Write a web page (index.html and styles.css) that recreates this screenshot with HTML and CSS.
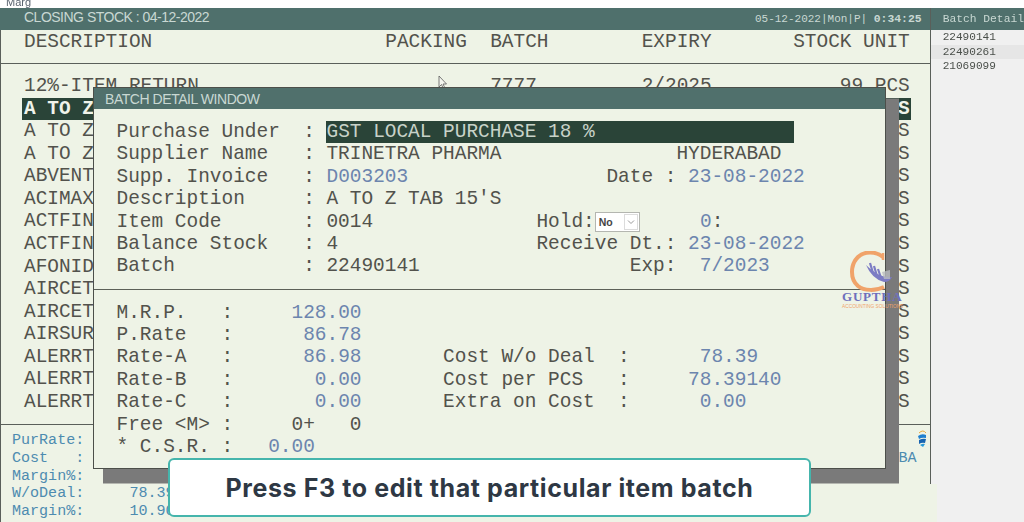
FILE: index.html
```html
<!DOCTYPE html>
<html lang="en">

<head>
    <meta charset="UTF-8">
    <title>Marg - Closing Stock</title>
    <link rel="stylesheet" href="styles.css">
</head>

<body>
    <div class="app-title">Marg</div>

    <div class="screen">
        <section class="stock">
            <header class="bar">
                <span class="bar-title">CLOSING STOCK : 04-12-2022</span>
                <span class="bar-clock">05-12-2022|Mon|P| <b>0:34:25</b></span>
            </header>

            <div class="row heads">
                <span>DESCRIPTION</span><span>PACKING</span><span>BATCH</span><span>EXPIRY</span><span class="qty">STOCK UNIT</span>
            </div>

            <div class="list">
                <div class="row"><span>12%-ITEM RETURN</span><span></span><span>7777</span><span>2/2025</span><span class="qty">99 PCS</span></div>
                <div class="row selected"><span>A TO Z TAB 15'S</span><span class="qty">PCS</span></div>
                <div class="row"><span>A TO Z</span><span class="qty">PCS</span></div>
                <div class="row"><span>A TO Z</span><span class="qty">PCS</span></div>
                <div class="row"><span>ABVENT</span><span class="qty">PCS</span></div>
                <div class="row"><span>ACIMAX</span><span class="qty">PCS</span></div>
                <div class="row"><span>ACTFIN</span><span class="qty">PCS</span></div>
                <div class="row"><span>ACTFIN</span><span class="qty">PCS</span></div>
                <div class="row"><span>AFONID</span><span class="qty">PCS</span></div>
                <div class="row"><span>AIRCET</span><span class="qty">PCS</span></div>
                <div class="row"><span>AIRCET</span><span class="qty">PCS</span></div>
                <div class="row"><span>AIRSUR</span><span class="qty">PCS</span></div>
                <div class="row"><span>ALERRT</span><span class="qty">PCS</span></div>
                <div class="row"><span>ALERRT</span><span class="qty">PCS</span></div>
                <div class="row"><span>ALERRT</span><span class="qty">PCS</span></div>
            </div>

            <footer class="summary">
                <div class="summary-lines">
                    <div class="line">PurRate:</div>
                    <div class="line">Cost   :</div>
                    <div class="line">Margin%:</div>
                    <div class="line">W/oDeal:     78.39</div>
                    <div class="line">Margin%:     10.90</div>
                </div>
                <div class="summary-side">
                    <svg class="globe" width="10" height="18" viewBox="0 0 10 18">
                        <path d="M2 3 Q6 -1 9 3" fill="none" stroke="#e8a93c" stroke-width="1"/>
                        <path d="M1 6 Q5 3 9 5 L9 8 Q5 7 2 9 Z" fill="#1f7fd0"/>
                        <path d="M2 10 Q6 8 9 9 L8 13 Q5 12 2 14 Z" fill="#1763b0"/>
                        <path d="M3 15 Q6 13 8 14 L6 17 Z" fill="#2a9ad8"/>
                    </svg>
                    <span class="summary-code">BA</span>
                </div>
            </footer>
        </section>

        <aside class="batches">
            <div class="batches-head">Batch Detail</div>
            <div class="batch">22490141</div>
            <div class="batch current">22490261</div>
            <div class="batch">21069099</div>
        </aside>
    </div>

    <svg class="cursor" width="10" height="15" viewBox="0 0 10 15">
        <path d="M1 1 L1 12 L3.5 9.5 L5.5 14 L7 13.2 L5 9 L8.5 9 Z" fill="#f4f6ef" stroke="#5a5a5a" stroke-width="0.8"/>
    </svg>

    <div class="dialog">
        <div class="dialog-title">BATCH DETAIL WINDOW</div>

        <div class="dialog-upper">
            <div class="line">Purchase Under  : <span class="picked">GST LOCAL PURCHASE 18 %</span></div>
            <div class="line">Supplier Name   : TRINETRA PHARMA               HYDERABAD</div>
            <div class="line">Supp. Invoice   : <span class="val">D003203</span>                 Date : <span class="val">23-08-2022</span></div>
            <div class="line">Description     : A TO Z TAB 15'S</div>
            <div class="line">Item Code       : 0014              Hold:<span class="combo">No<span class="combo-arrow"><svg width="8" height="6" viewBox="0 0 8 6"><path d="M1 1.5 L4 4.5 L7 1.5" fill="none" stroke="#9a9a9a"/></svg></span></span>     <span class="val">0</span>:</div>
            <div class="line">Balance Stock   : 4                 Receive Dt.: <span class="val">23-08-2022</span></div>
            <div class="line">Batch           : 22490141                  Exp:  <span class="val">7/2023</span></div>
        </div>

        <div class="dialog-lower">
            <div class="line">M.R.P.   :     <span class="val">128.00</span></div>
            <div class="line">P.Rate   :      <span class="val">86.78</span></div>
            <div class="line">Rate-A   :      <span class="val">86.98</span>       Cost W/o Deal  :      <span class="val">78.39</span></div>
            <div class="line">Rate-B   :       <span class="val">0.00</span>       Cost per PCS   :     <span class="val">78.39140</span></div>
            <div class="line">Rate-C   :       <span class="val">0.00</span>       Extra on Cost  :      <span class="val">0.00</span></div>
            <div class="line">Free &lt;M&gt; :     0+   0</div>
            <div class="line">* C.S.R. :   <span class="val">0.00</span></div>
        </div>
    </div>

    <div class="logo">
        <svg width="58" height="42" viewBox="0 0 58 42">
            <path d="M41 6 C34 0 22 0 16 6 C8 14 8 28 16 35 C22 40 34 40 42 36" fill="none" stroke="#f0a36a" stroke-width="4"/>
            <path d="M41 2 L41 9" stroke="#f0a36a" stroke-width="2.5"/>
            <path d="M24 14 Q30 28 42 31 Q48 31 50 26 Q38 28 24 14 Z" fill="#7c7cc4"/>
            <path d="M28 12 L31 22 M32 15 L35 25 M36 18 L39 27" stroke="#7c7cc4" stroke-width="2.2"/>
            <path d="M40 21 L48 19 L48 28 L42 28 Z" fill="#b9bcc0" opacity="0.8"/>
        </svg>
        <div class="logo-name">GUPTHA</div>
        <div class="logo-sub">ACCOUNTING SOLUTIONS</div>
    </div>

    <div class="toast">Press F3 to edit that particular item batch</div>
</body>

</html>
```

FILE: styles.css
```css
* {
    box-sizing: border-box;
}

html,
body {
    margin: 0;
    padding: 0;
}

body {
    position: relative;
    width: 1024px;
    height: 522px;
    overflow: hidden;
    background: #fff;
    font-family: 'Liberation Mono', monospace;
    color: #52524c;
    filter: blur(0.35px);
}

.app-title {
    height: 8px;
    padding-left: 6px;
    overflow: hidden;
    font-family: 'Liberation Sans', sans-serif;
    font-size: 11px;
    line-height: 5px;
    color: #5a6470;
}

.screen {
    display: flex;
    height: 514px;
}

/* Closing stock list */
.stock {
    position: relative;
    display: flex;
    flex-direction: column;
    width: 933px;
    border-left: 1px solid #5a5f5a;
    background: #eef3e6;
    font-size: 19.43px;
    line-height: 22.57px;
}

.stock::after {
    content: '';
    position: absolute;
    top: 0;
    right: 0;
    width: 1px;
    height: 476px;
    background: #5a5f5a;
}

.bar {
    display: flex;
    flex: none;
    justify-content: space-between;
    align-items: center;
    height: 22px;
    margin-left: -1px;
    padding: 0 9px 0 24px;
    background: #4f706c;
    color: #c9d8d3;
}

.bar-title {
    margin-top: -3px;
    font-family: 'Liberation Sans', sans-serif;
    font-size: 14px;
    letter-spacing: -0.5px;
}

.bar-clock {
    margin-top: -1px;
    font-size: 11px;
    line-height: 22px;
    white-space: pre;
}

.bar-clock b {
    font-size: 11.4px;
}

.row {
    display: grid;
    grid-template-columns: 31ch 9ch 13ch 13ch 10ch;
    width: 76ch;
    margin-left: 23px;
    white-space: pre;
}

.qty {
    grid-column: 5;
    text-align: right;
}

.heads {
    flex: none;
    width: auto;
    height: 34px;
    margin-left: 0;
    margin-right: 1px;
    padding: 1px 0 0 23px;
    border-bottom: 1px solid #5a5f5a;
}

.list {
    flex: 1;
    padding-top: 11px;
}

.selected {
    width: calc(76ch + 3px);
    margin-left: 21px;
    padding-left: 2px;
    background: #2a4438;
    color: #f0f3ea;
    font-weight: bold;
}

.summary {
    flex: none;
    display: flex;
    justify-content: space-between;
    height: 98px;
    padding: 7px 4px 0 11px;
    border-top: 1px solid #5a5f5a;
    font-size: 15.05px;
    line-height: 17.8px;
    color: #4d8bb0;
}

.summary-side {
    display: flex;
    flex-direction: column;
    align-items: flex-end;
}

.globe {
    margin-top: -2px;
}

.summary-code {
    margin-top: 2px;
    margin-right: 10px;
}

/* Batch column on the right */
.batches {
    flex: 1;
    background: #f0f0f0 linear-gradient(#eef3e6, #eef3e6) left bottom / 6px 38px no-repeat;
    font-size: 11.1px;
    color: #4a4f4a;
}

.batches-head {
    height: 22px;
    padding-left: 12px;
    background: #4f706c;
    color: #c9d8d3;
    font-size: 11.3px;
    line-height: 23px;
    white-space: nowrap;
    overflow: hidden;
}

.batch {
    height: 14.5px;
    padding-left: 12px;
    line-height: 14.5px;
}

.current {
    background: #e6e6e6;
}

.cursor {
    position: absolute;
    left: 438px;
    top: 75px;
}

/* Batch detail window */
.dialog {
    position: absolute;
    left: 93px;
    top: 87px;
    width: 793px;
    height: 382px;
    border: 1px solid #4c4f4a;
    background: #eef3e6;
    box-shadow: 11.5px 13px 0 1.5px #7a7a7a;
    font-size: 19.45px;
    line-height: 22.4px;
}

.dialog-title {
    height: 21px;
    padding-left: 11px;
    background: #50706c;
    color: #c9d8d3;
    font-family: 'Liberation Sans', sans-serif;
    font-size: 14px;
    line-height: 22px;
    letter-spacing: -0.45px;
}

.dialog-upper {
    height: 181px;
    padding: 12px 0 0 22.5px;
    border-bottom: 1px solid #5c6058;
}

.dialog-lower {
    padding: 11.5px 0 0 22.5px;
}

.line {
    white-space: pre;
}

.val {
    color: #6c85ae;
}

.picked {
    display: inline-block;
    width: 468px;
    background: #2a4438;
    color: #c8d2c8;
}

.combo {
    display: inline-flex;
    justify-content: space-between;
    align-items: center;
    width: 45px;
    height: 20px;
    margin-right: 2px;
    padding-left: 3px;
    border: 1px solid #b4b6b0;
    background: #fff;
    color: #444;
    font-family: 'Liberation Sans', sans-serif;
    font-size: 10.5px;
    font-weight: bold;
    line-height: 18px;
    vertical-align: 1px;
}

.combo-arrow {
    display: flex;
    justify-content: center;
    align-items: center;
    width: 14px;
    height: 16px;
    margin-right: 1px;
    border: 1px solid #dcdcdc;
}

/* Watermark logo */
.logo {
    position: absolute;
    left: 842px;
    top: 251px;
    width: 58px;
    text-align: center;
}

.logo svg {
    display: block;
}

.logo-name {
    margin-top: -3px;
    font-family: 'Liberation Serif', serif;
    font-size: 13px;
    font-weight: bold;
    line-height: 13px;
    letter-spacing: 0.8px;
    color: #6d6fbc;
}

.logo-sub {
    font-family: 'Liberation Sans', sans-serif;
    font-size: 4.8px;
    line-height: 7px;
    white-space: nowrap;
    color: #f0a36a;
}

/* Caption on top of the video */
.toast {
    position: absolute;
    left: 168px;
    top: 458px;
    display: flex;
    justify-content: center;
    align-items: center;
    width: 643px;
    height: 59px;
    border: 2px solid #45b5ac;
    border-radius: 6px;
    background: #fff;
    font-family: Inter, sans-serif;
    font-size: 25px;
    font-weight: 700;
    letter-spacing: 0.6px;
    color: #2e3844;
}
```
